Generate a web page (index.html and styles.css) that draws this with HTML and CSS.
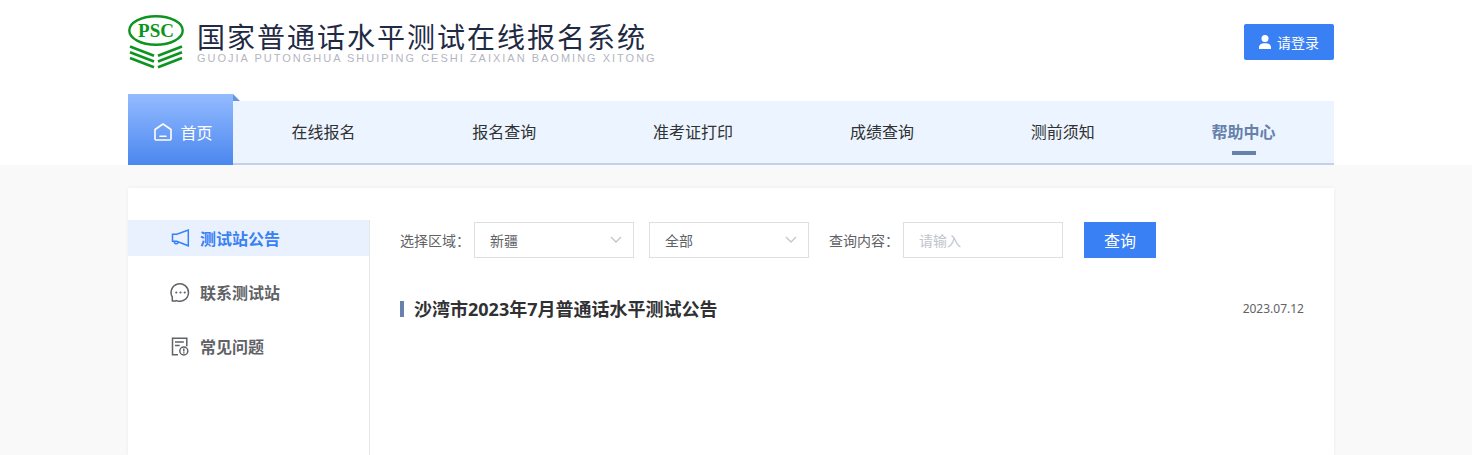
FILE: index.html
```html
<!DOCTYPE html>
<html lang="zh-CN">
<head>
    <meta charset="UTF-8">
    <meta name="viewport" content="width=device-width, initial-scale=1.0">
    <title>国家普通话水平测试在线报名系统</title>
    <link rel="stylesheet" href="styles.css">
</head>
<body>

    <!-- 页头 -->
    <header class="header">
        <div class="container">
            <div class="header-top">
                <div class="logo">
                    <svg class="logo-mark" viewBox="0 0 56 54" width="56" height="54">
                        <ellipse cx="28" cy="15.5" rx="26.7" ry="14.3" fill="#fff" stroke="#0c9420" stroke-width="2.4"/>
                        <text class="logo-psc" x="28" y="21.5" text-anchor="middle">PSC</text>
                        <g fill="none" stroke="#0c9420" stroke-width="2.700">
                            <path d="M2 31.500L26 40.700"/>
                            <path d="M2 37.300L26 46.500"/>
                            <path d="M2 43L26 52.200"/>
                            <path d="M54 31.500L30 40.700"/>
                            <path d="M54 37.300L30 46.500"/>
                            <path d="M54 43L30 52.200"/>
                        </g>
                    </svg>
                    <div class="logo-text">
                        <h1>国家普通话水平测试在线报名系统</h1>
                        <p>GUOJIA PUTONGHUA SHUIPING CESHI ZAIXIAN BAOMING XITONG</p>
                    </div>
                </div>
                <button type="button" class="btn btn-login">
                    <svg viewBox="0 0 12 14" width="12" height="14" fill="#fff">
                        <circle cx="6" cy="3.500" r="3.500"/>
                        <path d="M0 14v-1.500C0 9.800 2.200 8.300 6 8.300s6 1.500 6 4.200V14z"/>
                    </svg>
                    请登录
                </button>
            </div>

            <!-- 导航 -->
            <nav class="nav">
                <a href="#" class="nav-home">
                    <svg viewBox="0 0 18 18" width="18" height="18" fill="none" stroke="#fff" stroke-width="1.600" stroke-linejoin="round" stroke-linecap="round">
                        <path d="M1 6.500L9 1l8 5.500V16a1 1 0 0 1-1 1H2a1 1 0 0 1-1-1z"/>
                        <path d="M6 13.300h6"/>
                    </svg>
                    首页
                </a>
                <div class="nav-list">
                    <a href="#">在线报名</a>
                    <a href="#">报名查询</a>
                    <a href="#">准考证打印</a>
                    <a href="#">成绩查询</a>
                    <a href="#">测前须知</a>
                    <a href="#" class="active">帮助中心</a>
                </div>
            </nav>
        </div>
    </header>

    <!-- 主体 -->
    <main class="main">
        <div class="container panel">
            <aside class="sidebar">
                <a href="#" class="active">
                    <svg viewBox="0 0 20 20" width="20" height="20" fill="none" stroke="currentColor" stroke-width="1.500">
                        <path d="M2.500 6.300h4.300L18.300 2v15.800L6.800 13.300H2.500z"/>
                        <path d="M4.200 13.300c.2 1.700 1 2.500 2.200 2.500 1 0 1.700-.7 1.800-1.900"/>
                    </svg>
                    测试站公告
                </a>
                <a href="#">
                    <svg viewBox="0 0 20 20" width="20" height="20" fill="none" stroke="currentColor" stroke-width="1.500">
                        <path d="M2.300 19V15A8.700 8.700 0 1 1 6.500 18.600L5.500 19z" stroke-linejoin="round"/>
                        <g fill="currentColor" stroke="none">
                            <circle cx="6.300" cy="10.500" r="1.100"/>
                            <circle cx="10.500" cy="10.500" r="1.100"/>
                            <circle cx="14.700" cy="10.500" r="1.100"/>
                        </g>
                    </svg>
                    联系测试站
                </a>
                <a href="#">
                    <svg viewBox="0 0 20 20" width="20" height="20" fill="none" stroke="currentColor" stroke-width="1.500">
                        <path d="M8 18.800H2.500V2.200h14.300v8"/>
                        <path d="M5 6h8.800M5 9.500h4.700"/>
                        <circle cx="13.800" cy="15" r="4"/>
                        <path d="M13.800 12.500v3M13.800 16.300v1.200"/>
                    </svg>
                    常见问题
                </a>
            </aside>

            <section class="content">
                <form class="search">
                    <label for="province">选择区域：</label>
                    <div class="select">
                        <select id="province">
                            <option>新疆</option>
                        </select>
                        <svg viewBox="0 0 12 8" width="12" height="8"><path d="M1 1l5 5 5-5"/></svg>
                    </div>
                    <div class="select">
                        <select id="city" aria-label="选择城市">
                            <option>全部</option>
                        </select>
                        <svg viewBox="0 0 12 8" width="12" height="8"><path d="M1 1l5 5 5-5"/></svg>
                    </div>
                    <label for="keyword" class="label-keyword">查询内容：</label>
                    <input type="text" id="keyword" placeholder="请输入">
                    <button type="button" class="btn btn-search">查询</button>
                </form>

                <!-- 公告列表 -->
                <ul class="news">
                    <li>
                        <a href="#">沙湾市2023年7月普通话水平测试公告</a>
                        <time datetime="2023-07-12">2023.07.12</time>
                    </li>
                </ul>
            </section>
        </div>
    </main>

</body>
</html>
```
FILE: styles.css
```css
* {
    margin: 0;
    padding: 0;
    box-sizing: border-box;
}

body {
    display: flex;
    flex-direction: column;
    min-height: 100vh;
    font-family: "Noto Sans", "Noto Sans CJK SC", sans-serif;
    font-size: 14px;
    color: #606266;
    background-color: #f9f9f9;
}

a {
    color: inherit;
    text-decoration: none;
}

button, input, select {
    font-family: inherit;
    font-size: 14px;
}

.container {
    width: 100%;
    max-width: 1206px;
    margin: 0 auto;
}

/* 页头 */
.header {
    padding-right: 10px;
    background-color: #fff;
}

.header-top {
    display: flex;
    align-items: center;
    justify-content: space-between;
    height: 94px;
    padding-bottom: 11px;
}

.logo {
    display: flex;
    align-items: center;
    gap: 13px;
}

.logo-psc {
    font-family: "Liberation Serif", serif;
    font-size: 19px;
    font-weight: bold;
    fill: #0c9420;
}

.logo-text h1 {
    font-family: "Noto Sans CJK SC", sans-serif;
    font-size: 28px;
    font-weight: 400;
    line-height: 32px;
    letter-spacing: 2px;
    color: #1f2a44;
}

.logo-text p {
    font-family: "Liberation Sans", Arial, sans-serif;
    font-size: 11px;
    line-height: 12px;
    letter-spacing: 2px;
    color: #b4b6bf;
}

.btn {
    height: 36px;
    border: none;
    color: #fff;
    background-color: #3880f4;
    cursor: pointer;
}

.btn-login {
    display: flex;
    align-items: center;
    justify-content: center;
    gap: 6px;
    width: 90px;
    border-radius: 2px;
}

/* 导航 */
.nav {
    display: flex;
    align-items: flex-end;
    font-size: 16px;
}

.nav-home {
    position: relative;
    display: flex;
    align-items: center;
    justify-content: center;
    gap: 8px;
    width: 105px;
    height: 71px;
    padding: 4px 0 0 6px;
    color: #fff;
    background: linear-gradient(#94bbff, #4a87ef);
}

/* 右上角折角 */
.nav-home::after {
    content: "";
    position: absolute;
    top: 0;
    left: 100%;
    border-bottom: 7px solid #6a93df;
    border-right: 7px solid transparent;
}

.nav-list {
    flex: 1;
    display: flex;
    justify-content: space-around;
    height: 64px;
    border-bottom: 2px solid #c0d3e8;
    line-height: 62px;
    color: #303133;
    background-color: #ecf5ff;
}

.nav-list a {
    position: relative;
}

.nav-list .active {
    font-weight: bold;
    color: #6681ab;
}

.nav-list .active::after {
    content: "";
    position: absolute;
    left: 50%;
    bottom: 8px;
    width: 24px;
    height: 4px;
    margin-left: -12px;
    background-color: #6681ab;
}

/* 主体 */
.main {
    flex: 1;
    display: flex;
    padding: 23px 10px 0 0;
}

.panel {
    display: flex;
    padding-top: 32px;
    background-color: #fff;
    box-shadow: 0 0 4px rgba(0, 0, 0, 0.06);
}

.sidebar {
    display: flex;
    flex-direction: column;
    gap: 18px;
    width: 242px;
    border-right: 1px solid #e4e7ed;
}

.sidebar a {
    display: flex;
    align-items: center;
    gap: 10px;
    height: 36px;
    padding-left: 42px;
    font-size: 16px;
    font-weight: bold;
}

.sidebar .active {
    color: #3880f4;
    background-color: #e9f1fe;
}

.content {
    flex: 1;
    padding: 2px 30px 0;
}

/* 查询条件 */
.search {
    display: flex;
    align-items: center;
}

.search label {
    margin-right: 4px;
}

.search .label-keyword {
    margin-left: 5px;
}

.select {
    position: relative;
    width: 160px;
    margin-right: 15px;
}

.select select,
.search input {
    width: 160px;
    height: 36px;
    padding: 0 15px;
    border: 1px solid #dcdfe6;
    border-radius: 0;
    color: #606266;
    background-color: #fff;
    appearance: none;
    outline: none;
}

.search input::placeholder {
    color: #c0c4cc;
}

.select svg {
    position: absolute;
    top: 14px;
    right: 12px;
    fill: none;
    stroke: #c0c4cc;
    stroke-width: 1.3;
    pointer-events: none;
}

.btn-search {
    width: 72px;
    margin-left: 21px;
    font-size: 16px;
}

/* 公告列表 */
.news {
    margin-top: 36px;
    list-style: none;
}

.news li {
    display: flex;
    align-items: center;
    line-height: 30px;
}

.news li::before {
    content: "";
    width: 4px;
    height: 16px;
    margin-right: 10px;
    background-color: #6681ab;
}

.news a {
    flex: 1;
    font-size: 18px;
    font-weight: bold;
    color: #303133;
}

.news time {
    font-size: 12px;
}
```
